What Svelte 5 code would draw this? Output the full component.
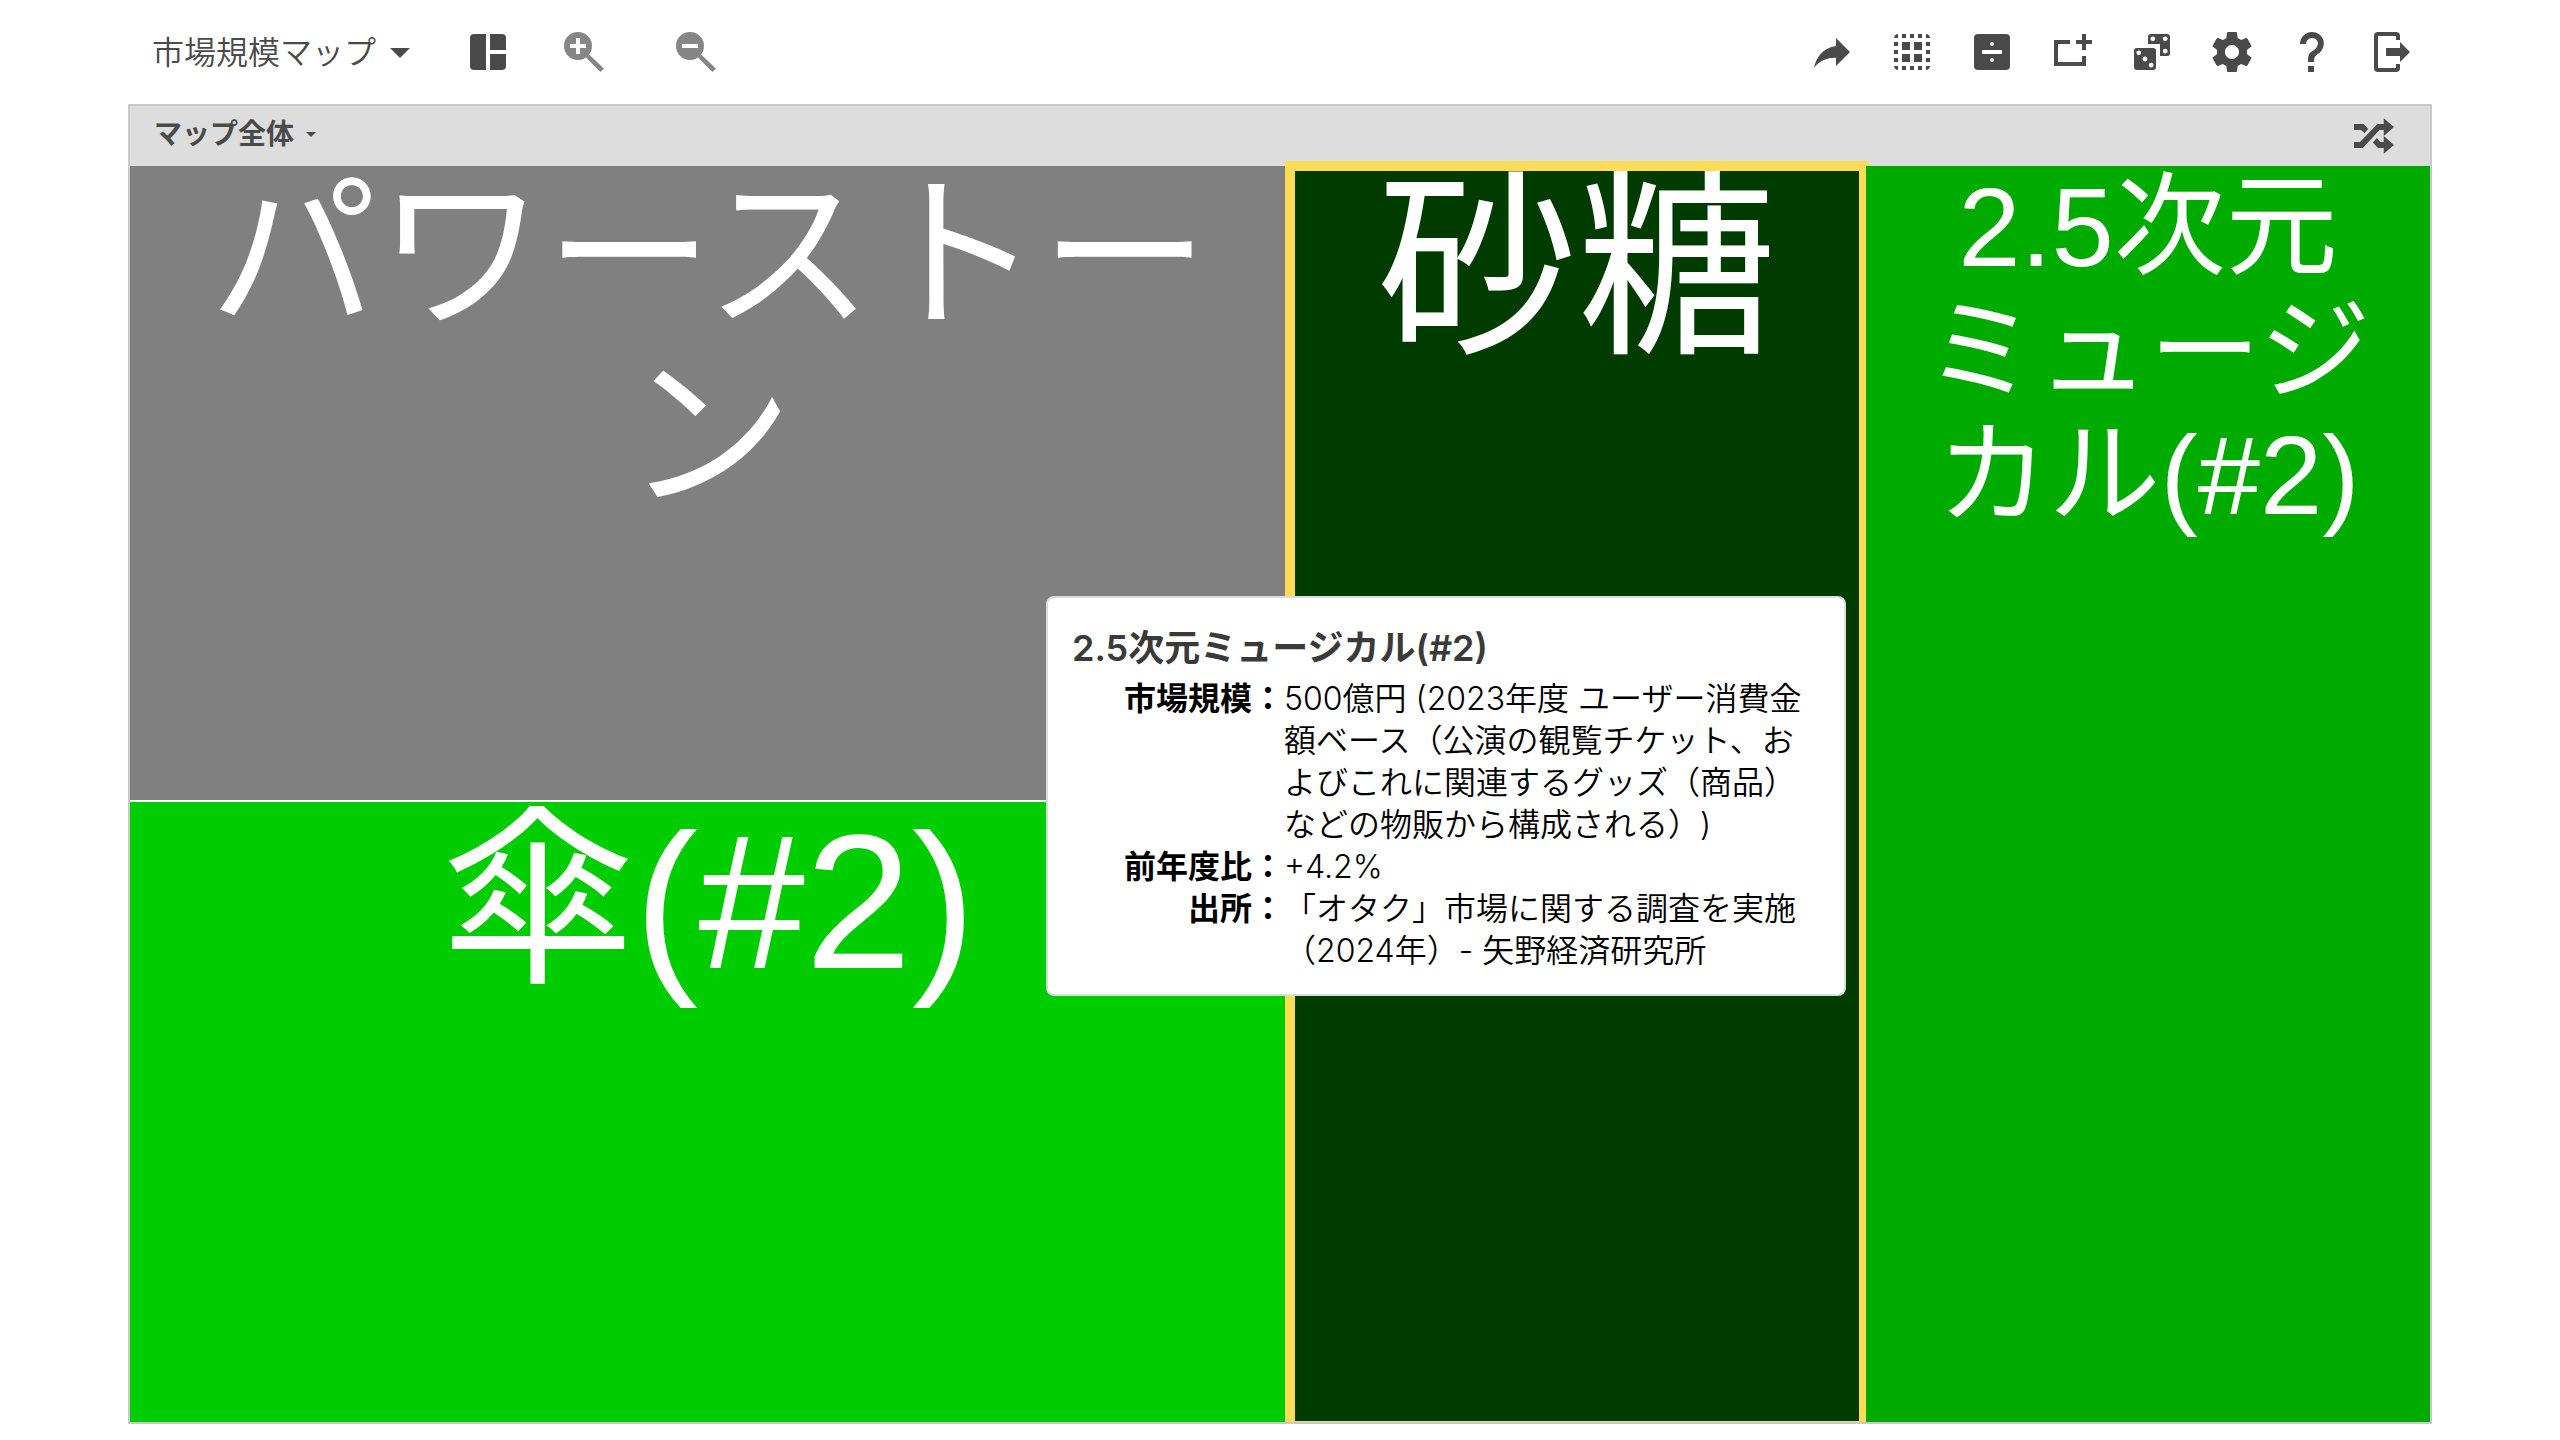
<script>
  const tools = [
    { label: '共有', d: 'M14 5v4C7 10 4 15 3 20c2.5-3.5 6-5.1 11-5.1V19l7-7-7-7z' },
    { label: 'すべて選択', d: 'M3 5h2V3c-1.1 0-2 .9-2 2zm0 8h2v-2H3v2zm4 8h2v-2H7v2zM3 9h2V7H3v2zm10-6h-2v2h2V3zm6 0v2h2c0-1.1-.9-2-2-2zM5 21v-2H3c0 1.1.9 2 2 2zm-2-4h2v-2H3v2zM9 3H7v2h2V3zm2 18h2v-2h-2v2zm8-8h2v-2h-2v2zm0 8c1.1 0 2-.9 2-2h-2v2zm0-12h2V7h-2v2zm0 8h2v-2h-2v2zm-4 4h2v-2h-2v2zm0-16h2V3h-2v2zM7 7h4v4H7zM13 7h4v4h-4zM7 13h4v4H7zM13 13h4v4h-4z' },
    { label: '分割', d: 'M5 3h14a2 2 0 0 1 2 2v14a2 2 0 0 1-2 2H5a2 2 0 0 1-2-2V5a2 2 0 0 1 2-2zM7 11v2h10v-2zM12 7a1 1 0 1 0 0 2a1 1 0 1 0 0-2zM12 15a1 1 0 1 0 0 2a1 1 0 1 0 0-2z' },
    { label: '追加', d: 'M11 6H3v13h16v-5h-2v3H5V8h6zM17 3h2v3h3v2h-3v3h-2V8h-3V6h3z' },
    { label: 'ランダム', d: 'M11.5 3h8A1.5 1.5 0 0 1 21 4.500v8a1.500 1.500 0 0 1-1.500 1.500H16V8h-6V4.500A1.500 1.500 0 0 1 11.500 3zM12.400 4.200a1.200 1.200 0 1 0 0 2.400a1.200 1.200 0 1 0 0-2.400zM18.600 4.200a1.200 1.200 0 1 0 0 2.400a1.200 1.200 0 1 0 0-2.400zM18.600 10.400a1.200 1.200 0 1 0 0 2.400a1.200 1.200 0 1 0 0-2.400zM4.500 10h8a1.500 1.500 0 0 1 1.500 1.500v8a1.500 1.500 0 0 1-1.500 1.500h-8A1.500 1.500 0 0 1 3 19.500v-8A1.500 1.500 0 0 1 4.500 10zM5.400 11.200a1.200 1.200 0 1 0 0 2.400a1.200 1.200 0 1 0 0-2.400zM8.500 14.300a1.200 1.200 0 1 0 0 2.400a1.200 1.200 0 1 0 0-2.400zM11.600 17.400a1.200 1.200 0 1 0 0 2.400a1.200 1.200 0 1 0 0-2.400z' },
    { label: '設定', d: 'M19.43 12.98c.04-.32.07-.64.07-.98s-.03-.66-.07-.98l2.11-1.65c.19-.15.24-.42.12-.64l-2-3.46c-.12-.22-.39-.3-.61-.22l-2.49 1c-.52-.4-1.08-.73-1.69-.98l-.38-2.65C14.46 2.18 14.25 2 14 2h-4c-.25 0-.46.18-.49.42l-.38 2.65c-.61.25-1.17.59-1.69.98l-2.49-1c-.23-.09-.49 0-.61.22l-2 3.46c-.13.22-.07.49.12.64l2.11 1.65c-.04.32-.07.65-.07.98s.03.66.07.98l-2.11 1.65c-.19.15-.24.42-.12.64l2 3.46c.12.22.39.3.61.22l2.49-1c.52.4 1.08.73 1.69.98l.38 2.65c.03.24.24.42.49.42h4c.25 0 .46-.18.49-.42l.38-2.65c.61-.25 1.17-.59 1.69-.98l2.49 1c.23.09.49 0 .61-.22l2-3.46c.12-.22.07-.49-.12-.64l-2.11-1.65zM12 15.5c-1.93 0-3.5-1.57-3.5-3.5s1.57-3.5 3.5-3.5 3.5 1.57 3.5 3.5-1.57 3.5-3.5 3.5z' },
    { label: 'ヘルプ', d: 'M10 19H13V22H10V19M12 2C17.35 2.22 19.68 7.62 16.5 11.67C15.67 12.67 14.33 13.33 13.67 14.17C13 15 13 16 13 17H10C10 15.33 10 13.92 10.67 12.92C11.33 11.92 12.67 11.33 13.5 10.67C15.92 8.43 15.32 5.26 12 5A3 3 0 0 0 9 8H6A6 6 0 0 1 12 2Z' },
    { label: 'ログアウト', d: 'M5 2h9a2 2 0 0 1 2 2v2h-2V4H5v16h9v-2h2v2a2 2 0 0 1-2 2H5a2 2 0 0 1-2-2V4a2 2 0 0 1 2-2zM9 10h7V7l5 5-5 5v-3H9z' }
  ];

  const details = [
    { term: '市場規模', text: '500億円 (2023年度 ユーザー消費金額ベース（公演の観覧チケット、およびこれに関連するグッズ（商品）などの物販から構成される）)' },
    { term: '前年度比', text: '+4.2%' },
    { term: '出所', text: '「オタク」市場に関する調査を実施（2024年）- 矢野経済研究所' }
  ];
</script>

<div class="page" lang="ja">
  <header class="toolbar">
    <button class="map-menu">
      市場規模マップ
      <svg class="caret" viewBox="0 0 20 10" aria-hidden="true"><path d="M0 0h20L10 10z" /></svg>
    </button>
    <button class="tool" aria-label="レイアウト">
      <svg viewBox="0 0 24 24"><path d="M5 3h6v18H5a2 2 0 0 1-2-2V5a2 2 0 0 1 2-2zM13 3h6a2 2 0 0 1 2 2v6h-8zM13 13h8v6a2 2 0 0 1-2 2h-6z" /></svg>
    </button>
    <div class="zoom">
      <button class="tool" aria-label="拡大">
        <svg viewBox="0 0 24 24"><path fill-rule="evenodd" d="M9 2a7 7 0 1 0 0 14a7 7 0 1 0 0-14zM8 5h2v3h3v2h-3v3H8v-3H5V8h3z" /><path d="M14.600 13.200l7.400 7.200-1.800 1.600-7.200-7.200z" /></svg>
      </button>
      <button class="tool" aria-label="縮小">
        <svg viewBox="0 0 24 24"><path fill-rule="evenodd" d="M9 2a7 7 0 1 0 0 14a7 7 0 1 0 0-14zM5 8h8v2H5z" /><path d="M14.600 13.200l7.400 7.200-1.800 1.600-7.200-7.200z" /></svg>
      </button>
    </div>
    <nav class="tools" aria-label="ツール">
      {#each tools as tool}
        <button class="tool" aria-label={tool.label}>
          <svg viewBox="0 0 24 24"><path fill-rule="evenodd" d={tool.d} /></svg>
        </button>
      {/each}
    </nav>
  </header>

  <main class="map">
    <div class="map-bar">
      <button class="scope">
        マップ全体
        <svg class="small-caret" viewBox="0 0 10 5" aria-hidden="true"><path d="M0 0h10L5 5z" /></svg>
      </button>
      <button class="shuffle" aria-label="シャッフル">
        <svg viewBox="0 0 121 108"><path d="M0 18h29l14 15-11 12-11-9H0zM0 72h18L71 18h19V0l31 27-31 27V36H77L27 90H0zM69 60l10 12h11V54l31 27-31 27V90H73L57 74z" /></svg>
      </button>
    </div>

    <div class="tiles">
      <div class="stack">
        <button class="tile gray">パワーストーン</button>
        <button class="tile bright">傘(#2)</button>
      </div>
      <button class="tile dark">砂糖<span class="ring"></span></button>
      <button class="tile green"><span>2.5次元<wbr /><span class="word">ミュージ</span><wbr />カル(#2)</span></button>
    </div>

    <section class="tooltip" role="tooltip">
      <h2>2.5次元ミュージカル(#2)</h2>
      <dl>
        {#each details as item}
          <dt>{item.term}：</dt>
          <dd>{item.text}</dd>
        {/each}
      </dl>
    </section>
  </main>
</div>

<style>
  :global(body) {
    margin: 0;
    background: #fff;
  }
  .page {
    box-sizing: border-box;
    display: flex;
    flex-direction: column;
    min-height: 100vh;
    padding: 0 5% 16px;
    color: #4a4a4a;
    font-family: Inter, 'Noto Sans CJK JP', sans-serif;
    text-autospace: no-autospace;
    line-break: strict;
  }
  button {
    margin: 0;
    padding: 0;
    border: 0;
    background: none;
    color: inherit;
    font: inherit;
    cursor: pointer;
  }
  svg {
    display: block;
    fill: currentColor;
  }
  .toolbar {
    display: flex;
    align-items: center;
    height: 104px;
    padding: 0 16px 0 24px;
  }
  .map-menu {
    display: flex;
    align-items: center;
    gap: 14px;
    margin-right: 54px;
    padding-top: 2px;
    font-size: 32px;
    font-weight: 350;
    line-height: 48px;
  }
  .caret {
    width: 20px;
    height: 10px;
  }
  .tool svg {
    width: 48px;
    height: 48px;
  }
  .zoom {
    display: flex;
    gap: 64px;
    margin-left: 48px;
    color: #868686;
  }
  .tools {
    display: flex;
    gap: 32px;
    margin-left: auto;
  }
  .map {
    position: relative;
    display: flex;
    flex: 1;
    flex-direction: column;
    border: 2px solid #c9c9c9;
  }
  .map-bar {
    display: flex;
    align-items: center;
    justify-content: space-between;
    height: 60px;
    padding: 0 36px 0 24px;
    background: #ddd;
  }
  .scope {
    display: flex;
    align-items: center;
    gap: 12px;
    padding-bottom: 4px;
    font-size: 28px;
    font-weight: 700;
    line-height: 40px;
  }
  .small-caret {
    width: 10px;
    height: 5px;
  }
  .shuffle svg {
    width: 40px;
    height: 36px;
  }
  .tiles {
    display: grid;
    flex: 1;
    grid-template-columns: 1158fr 574fr 564fr;
    gap: 2px;
  }
  .stack {
    display: grid;
    grid-template-rows: 634fr 620fr;
    gap: 2px;
  }
  .tile {
    position: relative;
    display: flex;
    align-items: flex-start;
    justify-content: center;
    min-width: 0;
    padding: 0 16px;
    color: #fff;
    font-family: 'Liberation Sans', 'Noto Sans CJK JP', sans-serif;
    text-align: center;
  }
  .gray {
    background: #808080;
    font-size: 168px;
    line-height: 180px;
  }
  .bright {
    background: #00cd00;
    font-size: 192px;
    line-height: 200px;
  }
  .dark {
    background: #003b00;
    font-size: 200px;
    line-height: 206px;
  }
  .green {
    z-index: 2;
    background: #00ab00;
    font-size: 112px;
    line-height: 124px;
  }
  .word {
    display: inline-block;
  }
  .ring {
    position: absolute;
    inset: -5px -5px 0;
    z-index: 1;
    border: 10px solid #ffdc55;
    border-bottom-width: 1px;
  }
  .tooltip {
    position: absolute;
    top: 490px;
    left: 916px;
    z-index: 3;
    box-sizing: border-box;
    width: 800px;
    padding: 26px 24px 22px;
    border: 2px solid #ddd;
    border-radius: 8px;
    background: #fff;
    color: #000;
    font-size: 32px;
    font-weight: 350;
    line-height: 42px;
  }
  h2 {
    margin: 0 0 6px;
    color: #3a3a3a;
    font-size: 36px;
    font-weight: 600;
    line-height: 48px;
  }
  dl {
    display: grid;
    grid-template-columns: 212px 528px;
    margin: 0;
  }
  dt {
    font-weight: 700;
    text-align: right;
  }
  dd {
    margin: 0;
    text-spacing-trim: space-all;
  }
</style>
